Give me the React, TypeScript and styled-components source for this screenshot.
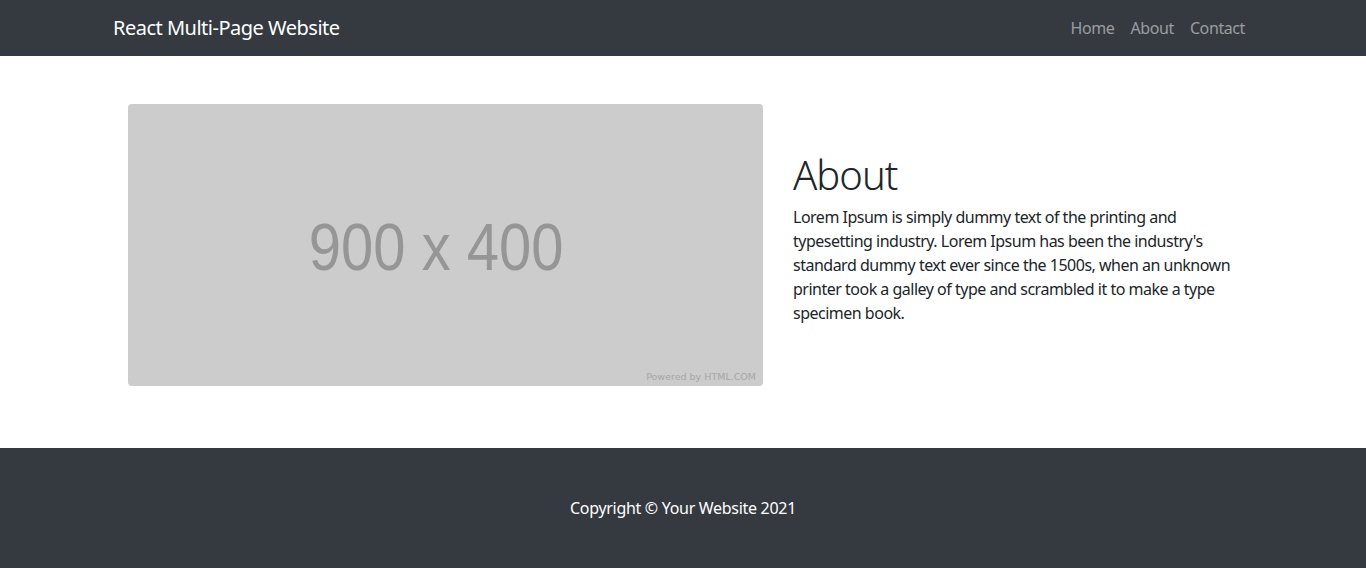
import React from "react";
import styled, { createGlobalStyle } from "styled-components";

const Global = createGlobalStyle`
  html, body { margin: 0; padding: 0; }
  body {
    font-family: "Noto Sans", "Open Sans", sans-serif;
    font-size: 16px;
    line-height: 1.5;
    color: #212529;
    background: #fff;
    letter-spacing: -0.3px;
  }
  * { box-sizing: border-box; }
`;

const Nav = styled.nav`
  background: #343a40;
  height: 56px;
  display: flex;
  justify-content: center;
`;

const NavInner = styled.div`
  width: 1140px;
  display: flex;
  align-items: center;
  justify-content: space-between;
`;

const Brand = styled.a`
  color: #fff;
  font-size: 20px;
  line-height: 30px;
  text-decoration: none;
  letter-spacing: -0.5px;
`;

const Links = styled.ul`
  list-style: none;
  display: flex;
  margin: 0;
  padding: 0;
`;

const LinkItem = styled.a`
  display: block;
  padding: 8px;
  color: rgba(255, 255, 255, 0.5);
  text-decoration: none;
  font-size: 16px;
  line-height: 24px;
  letter-spacing: -0.4px;
`;

const Main = styled.main`
  display: flex;
  justify-content: center;
  padding: 48px 0 62px;
`;

const Row = styled.div`
  width: 1140px;
  display: flex;
  align-items: center;
`;

const ImageCol = styled.div`
  width: 665px;
  padding: 0 15px;
`;

const Placeholder = styled.div`
  position: relative;
  width: 635px;
  height: 282px;
  background: #cccccc;
  border-radius: 4px;
  display: flex;
  align-items: center;
  justify-content: center;
  font-family: "Liberation Sans", Arial, sans-serif;
  color: #969696;
  font-size: 67px;
  line-height: 1;
  letter-spacing: 0;
  padding: 2px 18px 0 0;
`;

const PlaceholderLabel = styled.span`
  display: inline-block;
  transform: scaleX(0.865);
`;

const Powered = styled.span`
  position: absolute;
  right: 7px;
  bottom: 5px;
  font-family: "DejaVu Sans", sans-serif;
  font-size: 9.5px;
  color: #a6a6a6;
  letter-spacing: 0;
`;

const TextCol = styled.div`
  width: 475px;
  padding: 2px 15px 0;
`;

const Title = styled.h1`
  margin: 0 0 6px;
  font-size: 40px;
  font-weight: 300;
  line-height: 1.2;
  letter-spacing: -1px;
`;

const Para = styled.p`
  margin: 0 0 16px;
  letter-spacing: -0.5px;
  white-space: nowrap;
`;

const Footer = styled.footer`
  background: #343a40;
  padding: 48px 0;
  text-align: center;
`;

const FooterText = styled.p`
  margin: 0;
  color: #fff;
`;

export default function App() {
  return (
    <>
      <Global />
      <Nav>
        <NavInner>
          <Brand href="#">React Multi-Page Website</Brand>
          <Links>
            <li><LinkItem href="#">Home</LinkItem></li>
            <li><LinkItem href="#">About</LinkItem></li>
            <li><LinkItem href="#">Contact</LinkItem></li>
          </Links>
        </NavInner>
      </Nav>
      <Main>
        <Row>
          <ImageCol>
            <Placeholder>
              <PlaceholderLabel>900 x 400</PlaceholderLabel>
              <Powered>Powered by HTML.COM</Powered>
            </Placeholder>
          </ImageCol>
          <TextCol>
            <Title>About</Title>
            <Para>
              Lorem Ipsum is simply dummy text of the printing and
              <br />
              typesetting industry. Lorem Ipsum has been the industry's
              <br />
              standard dummy text ever since the 1500s, when an unknown
              <br />
              printer took a galley of type and scrambled it to make a type
              <br />
              specimen book.
            </Para>
          </TextCol>
        </Row>
      </Main>
      <Footer>
        <FooterText>Copyright © Your Website 2021</FooterText>
      </Footer>
    </>
  );
}
